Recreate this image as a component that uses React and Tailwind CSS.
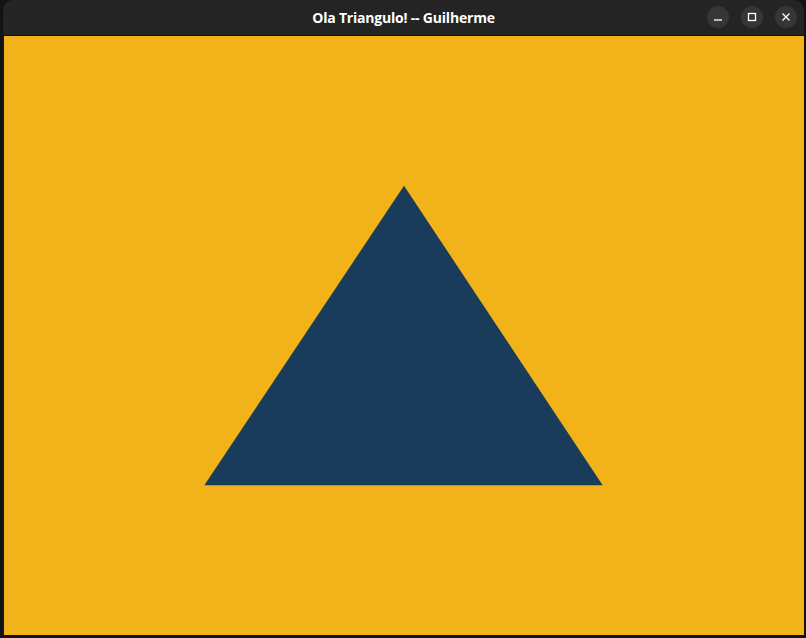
export default function App() {
  return (
    <div className="w-[806px] h-[638px] bg-[#111317] overflow-hidden flex flex-col pl-[3px] pr-[2px]">
      <div className="flex-1 flex flex-col bg-[#1b1b1b] rounded-t-[10px] overflow-hidden">
        <header className="relative h-[36px] shrink-0 bg-[#242424] flex items-center justify-center border-b border-[#0f0f0f]">
          <span className="text-white text-[14px] font-bold tracking-[-0.2px] font-['Open_Sans',sans-serif]">
            Ola Triangulo! -- Guilherme
          </span>
          <div className="absolute right-[7px] top-[6px] flex gap-[12px]">
            <button className="w-[22px] h-[22px] rounded-full bg-[#363636] flex items-center justify-center">
              <svg width="10" height="10" viewBox="0 0 10 10">
                <path d="M1 8h8" stroke="#fff" strokeWidth="1.3" />
              </svg>
            </button>
            <button className="w-[22px] h-[22px] rounded-full bg-[#363636] flex items-center justify-center">
              <svg width="10" height="10" viewBox="0 0 10 10">
                <rect x="1.5" y="1.5" width="7" height="7" fill="none" stroke="#fff" strokeWidth="1.3" />
              </svg>
            </button>
            <button className="w-[22px] h-[22px] rounded-full bg-[#363636] flex items-center justify-center">
              <svg width="10" height="10" viewBox="0 0 10 10">
                <path d="M1.5 1.5l7 7M8.5 1.5l-7 7" stroke="#fff" strokeWidth="1.3" />
              </svg>
            </button>
          </div>
        </header>
        <main className="w-[800px] h-[599px] ml-px bg-[#f2b31a]">
          <svg width="800" height="599" viewBox="0 0 800 600">
            <polygon points="400,150 200,450 599,450" fill="#193c5a" />
          </svg>
        </main>
      </div>
      <div className="h-[3px] shrink-0" />
    </div>
  );
}
